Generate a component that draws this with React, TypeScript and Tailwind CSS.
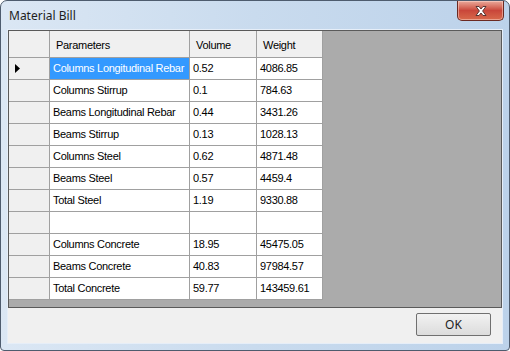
const rows: [string, string, string][] = [
  ["Columns Longitudinal Rebar", "0.52", "4086.85"],
  ["Columns Stirrup", "0.1", "784.63"],
  ["Beams Longitudinal Rebar", "0.44", "3431.26"],
  ["Beams Stirrup", "0.13", "1028.13"],
  ["Columns Steel", "0.62", "4871.48"],
  ["Beams Steel", "0.57", "4459.4"],
  ["Total Steel", "1.19", "9330.88"],
  ["", "", ""],
  ["Columns Concrete", "18.95", "45475.05"],
  ["Beams Concrete", "40.83", "97984.57"],
  ["Total Concrete", "59.77", "143459.61"],
];

const CloseButton = () => (
  <div className="w-[47px] h-[20px] rounded-b-[5px] border border-t-0 border-[#6b2a22] bg-gradient-to-b from-[#e9a99b] via-[#c9463a] to-[#d8694b] flex items-center justify-center shadow-[inset_0_0_0_1px_rgba(255,220,210,0.5)]">
    <svg width="14" height="12" viewBox="0 0 14 12">
      <path
        d="M2 1.5 L5 1.5 L7 4 L9 1.5 L12 1.5 L8.6 6 L12 10.5 L9 10.5 L7 8 L5 10.5 L2 10.5 L5.4 6 Z"
        fill="#ffffff"
        stroke="#4a2a28"
        strokeWidth="0.9"
        strokeLinejoin="round"
      />
    </svg>
  </div>
);

export default function App() {
  return (
    <div className="w-[510px] h-[351px] bg-white">
      <div
        className="w-[510px] h-[351px] rounded-t-[7px] rounded-b-[4px] border border-[#4e5c6e] bg-gradient-to-r from-[#dbe7f4] via-[#c9dbee] to-[#bcd2ea] flex flex-col"
        style={{ fontFamily: '"Liberation Sans", Arial, sans-serif' }}
      >
        {/* title bar */}
        <div className="h-[28px] flex items-start justify-between pl-[8px] pr-[5px]">
          <span
            className="text-[12px] text-[#1e1e1e] mt-[6px]"
            style={{ fontFamily: '"Noto Sans", "Open Sans", sans-serif' }}
          >
            Material Bill
          </span>
          <CloseButton />
        </div>

        {/* client area */}
        <div className="mx-[6px] flex-1 mb-[6px] border border-[#e6eef8] bg-[#f0f0f0] flex flex-col text-[11px] text-black tracking-[-0.3px]">
          <div className="h-[278px] border border-[#5a5a5a] bg-[#ababab] flex flex-col">
            {/* header */}
            <div className="flex h-[27px]">
              <div className="w-[41px] h-full bg-[#f0f0f0] border-r border-b border-[#a0a0a0]" />
              <div className="w-[140px] h-full bg-[#f0f0f0] border-r border-b border-[#a0a0a0] flex items-center pl-[6px] pt-[3px]">
                Parameters
              </div>
              <div className="w-[67px] h-full bg-[#f0f0f0] border-r border-b border-[#a0a0a0] flex items-center pl-[6px] pt-[3px]">
                Volume
              </div>
              <div className="w-[66px] h-full bg-[#f0f0f0] border-r border-b border-[#a0a0a0] flex items-center pl-[6px] pt-[3px]">
                Weight
              </div>
            </div>

            {rows.map(([name, vol, weight], i) => (
              <div key={i} className="flex h-[22px]">
                <div className="w-[41px] h-full bg-[#f0f0f0] border-r border-b border-[#a0a0a0] flex items-center pl-[6px]">
                  {i === 0 && (
                    <svg width="6" height="9" viewBox="0 0 6 9">
                      <path d="M0 0 L5 4.5 L0 9 Z" fill="#000" />
                    </svg>
                  )}
                </div>
                <div
                  className={`w-[140px] h-full border-r border-b border-[#a0a0a0] flex items-center pl-[3px] whitespace-nowrap overflow-hidden ${
                    i === 0 ? "bg-[#3399ff] text-white" : "bg-white"
                  }`}
                >
                  {name}
                </div>
                <div className="w-[67px] h-full bg-white border-r border-b border-[#a0a0a0] flex items-center pl-[3px]">
                  {vol}
                </div>
                <div className="w-[66px] h-full bg-white border-r border-b border-[#a0a0a0] flex items-center pl-[3px]">
                  {weight}
                </div>
              </div>
            ))}
          </div>

          <div className="flex-1 flex justify-end items-start pt-[5px] pr-[11px]">
            <button
              className="w-[75px] h-[23px] border border-[#707070] rounded-[2px] bg-gradient-to-b from-[#f2f2f2] to-[#dcdcdc] text-[12px] text-[#1e1e1e] tracking-normal flex items-center justify-center"
              style={{ fontFamily: '"Noto Sans", "Open Sans", sans-serif' }}
            >
              OK
            </button>
          </div>
        </div>
      </div>
    </div>
  );
}
